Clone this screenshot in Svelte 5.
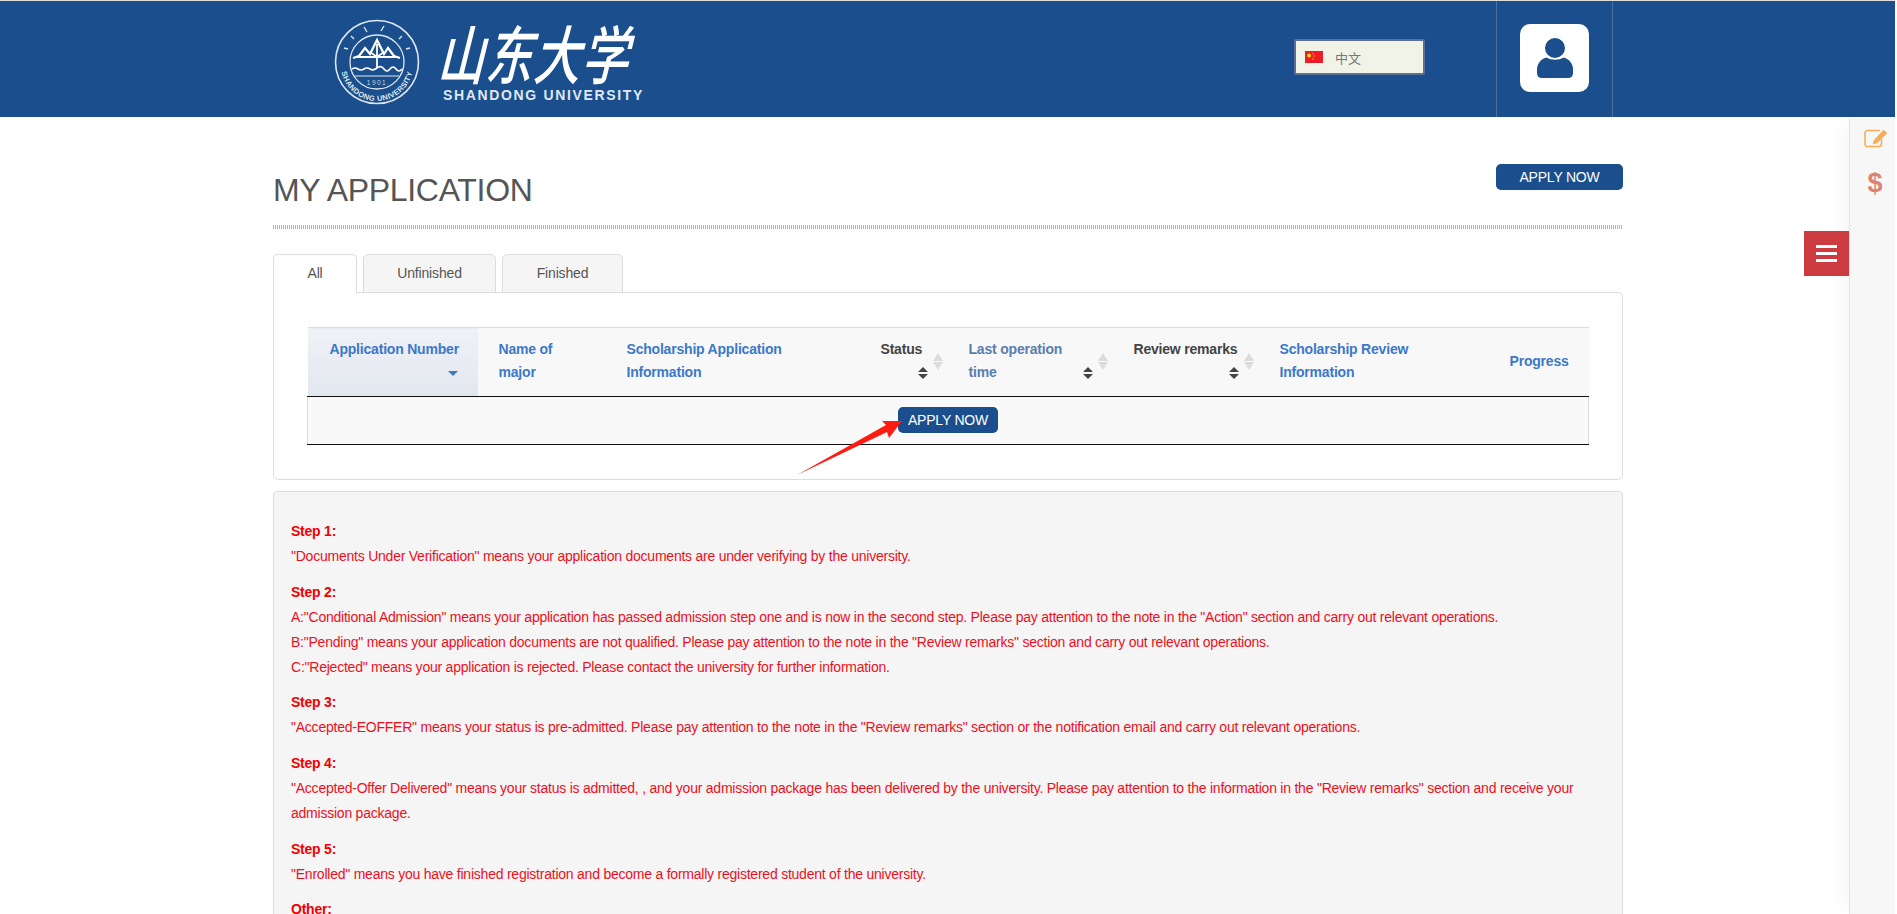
<script>
  const tabs = ['All', 'Unfinished', 'Finished'];

  // sort: 'desc' = active column, 'both' = sortable, null = plain
  const columns = [
    { label: 'Application Number', w: 170, sort: 'desc', cls: 'active' },
    { label: 'Name of major', w: 129 },
    { label: 'Scholarship Application Information', w: 253 },
    { label: 'Status', w: 89, sort: 'both', cls: 'dark' },
    { label: 'Last operation time', w: 165, sort: 'both', cls: 'muted' },
    { label: 'Review remarks', w: 146, sort: 'both', cls: 'dark' },
    { label: 'Scholarship Review Information', w: 230 },
    { label: 'Progress', w: 99 }
  ];

  const notes = [
    { title: 'Step 1:', lines: ['"Documents Under Verification" means your application documents are under verifying by the university.'] },
    {
      title: 'Step 2:',
      lines: [
        'A:"Conditional Admission" means your application has passed admission step one and is now in the second step. Please pay attention to the note in the "Action" section and carry out relevant operations.',
        'B:"Pending" means your application documents are not qualified. Please pay attention to the note in the "Review remarks" section and carry out relevant operations.',
        'C:"Rejected" means your application is rejected. Please contact the university for further information.'
      ]
    },
    { title: 'Step 3:', lines: ['"Accepted-EOFFER" means your status is pre-admitted. Please pay attention to the note in the "Review remarks" section or the notification email and carry out relevant operations.'] },
    { title: 'Step 4:', lines: ['"Accepted-Offer Delivered" means your status is admitted, , and your admission package has been delivered by the university. Please pay attention to the information in the "Review remarks" section and receive your admission package.'] },
    { title: 'Step 5:', lines: ['"Enrolled" means you have finished registration and become a formally registered student of the university.'] },
    { title: 'Other:', lines: [] }
  ];
</script>

<div class="page">
  <header>
    <div class="logo">
      <svg class="seal" width="86" height="86" viewBox="0 0 86 86" fill="none" stroke="#dfe8f2">
        <circle cx="43" cy="43" r="41.5" stroke-width="1.6" />
        <circle cx="43" cy="43" r="27" stroke-width="1.3" />
        <path d="M30 8l3 5M50 7l-3 5M17 17l3 3M68 17l-3 3M10 29l4 1M76 29l-4 1" stroke-width="1.4" />
        <path d="M19 39l6-2 6-8 5 6 7-14 7 14 4-6 6 8 6 2" stroke-width="2.2" stroke="#fff" />
        <path d="M22 38h42M43 25v24M36 33l7 5 7-5" stroke-width="1.8" stroke="#fff" />
        <path d="M18 50q3-2 6 0t6 0 6 0 7-1 7 1 6 0 6 0 6 0" stroke-width="1.7" stroke="#fff" />
        <path d="M21 57h44" stroke-width="1" />
        <path id="sealArc" d="M7 46a36 36 0 0 0 72 0" stroke="none" />
        <text class="seal-text" fill="#dfe8f2" stroke="none"><textPath href="#sealArc" startOffset="50%" text-anchor="middle">SHANDONG UNIVERSITY</textPath></text>
        <text class="seal-year" x="43" y="66" text-anchor="middle" fill="#c7d5e6" stroke="none">1901</text>
      </svg>
      <div class="wordmark">
        <div class="cn"><span>山</span><span>东</span><span>大</span><span>学</span></div>
        <div class="en">SHANDONG UNIVERSITY</div>
      </div>
    </div>

    <div class="lang">
      <svg width="18" height="12" viewBox="0 0 18 12">
        <rect width="18" height="12" fill="#ee1c25" />
        <circle cx="4" cy="4.5" r="2" fill="#ffde00" />
        <circle cx="8" cy="2.5" r=".7" fill="#ffde00" />
        <circle cx="9" cy="5" r=".7" fill="#ffde00" />
        <circle cx="8" cy="8" r=".7" fill="#ffde00" />
      </svg>
      <span>中文</span>
    </div>

    <div class="user">
      <div class="avatar">
        <svg width="36" height="40" viewBox="0 0 36 40" fill="#1a4e8c">
          <circle cx="18" cy="10" r="10" />
          <path d="M9 19.5q9 4.500 18 0c6 2 9 7 9 12v3.500q0 5-5 5H5q-5 0-5-5v-3.500c0-5 3-10 9-12z" />
        </svg>
      </div>
    </div>
  </header>

  <div class="body">
    <main>
      <div class="title-row">
        <h1>MY APPLICATION</h1>
        <button class="btn wide">APPLY NOW</button>
      </div>
      <div class="dots"></div>

      <ul class="tabs">
        {#each tabs as tab, i}
          <li class:current={i === 0} style="width: {[84, 133, 121][i]}px">{tab}</li>
        {/each}
      </ul>

      <section class="panel">
        <table>
          <colgroup>
            {#each columns as col}
              <col style="width: {col.w}px" />
            {/each}
          </colgroup>
          <thead>
            <tr>
              {#each columns as col}
                <th class={col.cls}>
                  {col.label}
                  {#if col.sort === 'desc'}
                    <span class="sort"><i class="caret"></i></span>
                  {:else if col.sort === 'both'}
                    <span class="sort"><i class="updown"></i></span>
                    <i class="updown ghost"></i>
                  {/if}
                </th>
              {/each}
            </tr>
          </thead>
          <tbody>
            <tr>
              <td colspan="8"><button class="btn small">APPLY NOW</button></td>
            </tr>
          </tbody>
        </table>
        <svg class="arrow" width="110" height="60" viewBox="0 0 110 60">
          <path d="M0 57L89 7 85 3 105 3 92 20 90 14Z" fill="#ff1a12" />
        </svg>
      </section>

      <section class="notes">
        {#each notes as note}
          <p>
            <b>{note.title}</b>
            {#each note.lines as line}
              <br />{line}
            {/each}
          </p>
        {/each}
      </section>
    </main>

    <aside>
      <svg class="edit" width="25" height="19" viewBox="0 0 25 19" fill="none">
        <path d="M17.500 10v5a2.500 2.500 0 0 1-2.500 2.500H3A2.200 2.200 0 0 1 1 15.500V4A2.500 2.500 0 0 1 3.500 1.500H16" stroke="#f5ae55" stroke-width="1.600" />
        <path d="M19.500.8L23.500 4 13 14.200 8.500 15.500 10 11z" fill="#f5ae55" />
      </svg>
      <span class="dollar">$</span>
      <button class="menu" aria-label="menu"><i></i><i></i><i></i></button>
    </aside>
  </div>
</div>

<style>
  :global(body) {
    overflow: hidden;
    background: #fff;
  }
  .page {
    width: 1895px;
    height: 914px;
    overflow: hidden;
    font-family: "Liberation Sans", Arial, sans-serif;
    font-size: 14px;
    color: #555;
  }

  header {
    height: 116px;
    margin-top: 1px;
    background: #1a4e8c;
    display: flex;
    box-shadow: 0 -1px 0 #ddd;
  }
  .logo {
    display: flex;
    margin-left: 334px;
    width: 960px;
    padding-top: 18px;
  }
  .seal {
    flex-shrink: 0;
  }
  .seal-text {
    font-size: 7.5px;
    font-weight: 700;
    letter-spacing: .4px;
    font-family: "Liberation Sans", sans-serif;
  }
  .seal-year {
    font-size: 6.500px;
    letter-spacing: 1.500px;
    font-family: "Liberation Sans", sans-serif;
  }
  .wordmark {
    margin-left: 23px;
    margin-top: -2px;
    color: #fff;
  }
  .cn {
    display: flex;
    height: 68px;
    align-items: center;
    font-family: "Noto Sans CJK SC", sans-serif;
    font-weight: 500;
    font-size: 47px;
    line-height: 1;
  }
  .cn span {
    display: block;
    width: 48px;
    text-align: center;
    transform: skewX(-14deg) scaleY(1.35);
  }
  .en {
    font-size: 14px;
    font-weight: 700;
    letter-spacing: 1.650px;
    line-height: 16px;
    margin-top: 2px;
    color: #dfe8f2;
    white-space: nowrap;
  }
  .lang {
    width: 131px;
    height: 36px;
    box-sizing: border-box;
    margin-top: 38px;
    background: #f0f3e6;
    border: 2px solid #5a6f9a;
    border-radius: 2px;
    display: flex;
    align-items: center;
    padding-left: 9px;
    gap: 12px;
    font: 13px "Noto Sans CJK SC", sans-serif;
    color: #777;
  }
  .user {
    margin-left: 71px;
    width: 115px;
    border: solid #4a6f9f;
    border-width: 0 1px;
    display: flex;
    justify-content: center;
    align-items: flex-start;
    padding-top: 23px;
  }
  .avatar {
    width: 69px;
    height: 68px;
    background: #fff;
    border-radius: 10px;
    display: flex;
    align-items: center;
    justify-content: center;
  }

  .body {
    display: flex;
    height: 797px;
  }
  main {
    width: 1350px;
    margin-left: 273px;
    flex-shrink: 0;
  }
  .title-row {
    display: flex;
    justify-content: space-between;
    align-items: flex-start;
    padding-top: 47px;
    height: 61px;
  }
  h1 {
    margin: 8px 0 0;
    font-size: 32px;
    line-height: 36px;
    font-weight: 400;
    letter-spacing: -.3px;
    color: #555;
  }
  .btn {
    background: #1a4e8c;
    color: #fff;
    border: 0;
    border-radius: 5px;
    font: 14px "Liberation Sans", Arial, sans-serif;
    letter-spacing: -.2px;
    height: 26px;
    padding: 0;
  }
  .btn.wide {
    width: 127px;
  }
  .btn.small {
    width: 100px;
  }
  .dots {
    height: 4px;
    background: repeating-linear-gradient(90deg, #b5b5b5 0 1px, #fff 1px 2px);
    margin-right: 1px;
  }

  .tabs {
    list-style: none;
    display: flex;
    gap: 6px;
    margin: 25px 0 0;
    padding: 0;
    height: 39px;
    position: relative;
    z-index: 1;
    letter-spacing: -.15px;
  }
  .tabs li {
    box-sizing: border-box;
    height: 39px;
    line-height: 37px;
    text-align: center;
    background: #f5f5f5;
    border: 1px solid #ddd;
    border-radius: 5px 5px 0 0;
  }
  .tabs li.current {
    background: #fff;
    border-bottom-color: #fff;
    height: 40px;
  }

  .panel {
    position: relative;
    margin-top: -1px;
    height: 188px;
    box-sizing: border-box;
    padding: 34px 33px 0;
    border: 1px solid #ddd;
    border-radius: 0 5px 5px 5px;
  }
  table {
    width: 1282px;
    table-layout: fixed;
    border-collapse: collapse;
  }
  th {
    position: relative;
    box-sizing: border-box;
    height: 68px;
    padding: 10px 20px 12px;
    background: #f8f8f8;
    border-top: 1px solid #ddd;
    border-bottom: 1px solid #111;
    text-align: left;
    line-height: 23px;
    font-weight: 700;
    color: #3c78c8;
    font-size: 14px;
    letter-spacing: -.2px;
  }
  th:nth-child(1) {
    padding-left: 22px;
    padding-right: 18px;
  }
  th:nth-child(2),
  th:nth-child(4) {
    padding-left: 21px;
  }
  th.active {
    background: linear-gradient(#eff2f7, #e2e6ee);
  }
  th.dark {
    color: #444;
  }
  th.muted {
    color: #5a7db0;
  }
  .sort {
    float: right;
    width: 12px;
    height: 23px;
    line-height: 23px;
    text-align: right;
  }
  .updown {
    display: inline-block;
    width: 10px;
    height: 12px;
    vertical-align: middle;
    margin-right: 1px;
    position: relative;
  }
  .updown::before,
  .updown::after {
    content: '';
    position: absolute;
    left: 0;
    border-left: 5px solid transparent;
    border-right: 5px solid transparent;
  }
  .updown::before {
    top: 0;
    border-bottom: 5px solid #444;
  }
  .updown::after {
    bottom: 0;
    border-top: 5px solid #444;
  }
  .ghost {
    position: absolute;
    right: 6px;
    top: 25px;
    height: 17px;
    margin: 0;
  }
  .ghost::before {
    border-bottom: 8px solid #dcdcdc;
  }
  .ghost::after {
    border-top: 8px solid #dcdcdc;
  }
  .caret {
    display: inline-block;
    vertical-align: middle;
    margin-right: 2px;
    border-left: 5px solid transparent;
    border-right: 5px solid transparent;
    border-top: 5px solid #3c78c8;
  }
  td {
    height: 48px;
    box-sizing: border-box;
    background: #f9f9f9;
    border-left: 1px solid #ddd;
    border-right: 1px solid #ddd;
    border-bottom: 1px solid #111;
    text-align: center;
    padding: 0 0 2px 0;
  }
  td .btn {
    vertical-align: middle;
  }
  .arrow {
    position: absolute;
    left: 523px;
    top: 125px;
  }

  .notes {
    margin-top: 11px;
    background: #f5f5f5;
    border: 1px solid #ddd;
    border-radius: 4px;
    padding: 27px 47px 0 17px;
    color: #ee0f1c;
    font-size: 14px;
    line-height: 25px;
    letter-spacing: -.23px;
  }
  .notes p {
    margin: 0 0 10.700px;
  }
  .notes b {
    color: #f00000;
  }

  aside {
    position: relative;
    flex: 1;
    box-sizing: border-box;
    background: #f7f7f7;
    border-left: 1px solid #e4e4e4;
    margin-left: 226px;
    margin-top: 1px;
    box-shadow: -14px 0 18px -6px rgba(0, 0, 0, .035);
    display: flex;
    flex-direction: column;
    align-items: center;
    padding-top: 11px;
  }
  .edit {
    margin-left: 8px;
  }
  .dollar {
    margin-top: 19px;
    margin-left: 5px;
    font: 700 27px/32px "Liberation Sans", sans-serif;
    color: #e08273;
  }
  .menu {
    position: absolute;
    right: calc(100% + 1px);
    top: 113px;
    width: 45px;
    height: 45px;
    padding: 0;
    border: 0;
    background: #cc3b40;
    display: flex;
    flex-direction: column;
    align-items: center;
    justify-content: center;
    gap: 4px;
  }
  .menu i {
    display: block;
    width: 21px;
    height: 3px;
    background: #fff;
  }
</style>
